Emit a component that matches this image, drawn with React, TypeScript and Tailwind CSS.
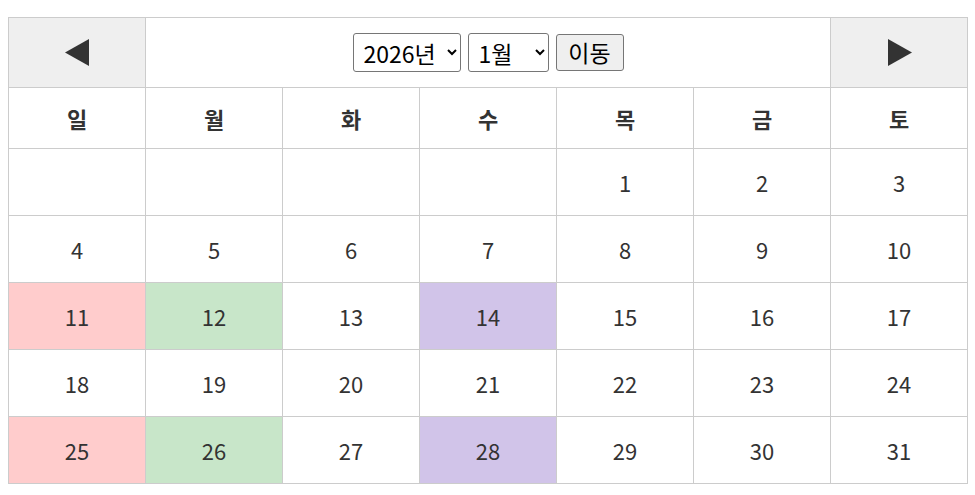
const DAYS = ["일", "월", "화", "수", "목", "금", "토"];

// 2026년 1월: starts Thursday
const WEEKS: (number | null)[][] = [
  [null, null, null, null, 1, 2, 3],
  [4, 5, 6, 7, 8, 9, 10],
  [11, 12, 13, 14, 15, 16, 17],
  [18, 19, 20, 21, 22, 23, 24],
  [25, 26, 27, 28, 29, 30, 31],
];

const HIGHLIGHT: Record<number, string> = {
  11: "bg-[#ffcccc]",
  25: "bg-[#ffcccc]",
  12: "bg-[#c8e6c9]",
  26: "bg-[#c8e6c9]",
  14: "bg-[#d1c4e9]",
  28: "bg-[#d1c4e9]",
};

export default function App() {
  return (
    <div className="pt-[17px] pl-2 bg-white min-h-[495px] text-[#333] font-['Noto_Sans_CJK_KR','Noto_Sans',sans-serif]">
      <table className="border-collapse table-fixed w-[960px]">
        <thead>
          <tr className="h-[70px]">
            <th className="w-[137px] border border-[#ccc] bg-[#efefef] p-0">
              <button className="w-full h-full flex items-center justify-center">
                <svg width="24" height="27" viewBox="0 0 24 27" className="mr-[1px]">
                  <polygon points="0,13.5 24,0 24,27" fill="#333" />
                </svg>
              </button>
            </th>
            <th colSpan={5} className="border border-[#ccc] p-0 font-normal">
              <div className="flex items-center justify-center gap-[7px]">
                <select
                  defaultValue="2026"
                  className="h-[39px] w-[108px] text-[23px] text-black border border-[#767676] rounded-[3px] bg-white pl-[6px] pr-[2px]"
                >
                  {[2024, 2025, 2026, 2027, 2028].map((y) => (
                    <option key={y} value={y}>
                      {y}년
                    </option>
                  ))}
                </select>
                <select
                  defaultValue="1"
                  className="h-[39px] w-[81px] text-[23px] text-black border border-[#767676] rounded-[3px] bg-white pl-[6px]"
                >
                  {Array.from({ length: 12 }, (_, i) => i + 1).map((m) => (
                    <option key={m} value={m}>
                      {m}월
                    </option>
                  ))}
                </select>
                <button className="h-[37px] w-[68px] text-[23px] text-black bg-[#efefef] border border-[#767676] rounded-[3px]">
                  이동
                </button>
              </div>
            </th>
            <th className="w-[137px] border border-[#ccc] bg-[#efefef] p-0">
              <button className="w-full h-full flex items-center justify-center">
                <svg width="24" height="27" viewBox="0 0 24 27" className="ml-[1px]">
                  <polygon points="0,0 24,13.5 0,27" fill="#333" />
                </svg>
              </button>
            </th>
          </tr>
          <tr className="h-[61px]">
            {DAYS.map((d) => (
              <th key={d} className="border border-[#ccc] text-[22px] font-bold">
                {d}
              </th>
            ))}
          </tr>
        </thead>
        <tbody>
          {WEEKS.map((week, wi) => (
            <tr key={wi} className="h-[67px]">
              {week.map((day, di) => (
                <td
                  key={di}
                  className={`border border-[#ccc] text-center text-[22px] ${day ? HIGHLIGHT[day] ?? "" : ""}`}
                >
                  {day ?? ""}
                </td>
              ))}
            </tr>
          ))}
        </tbody>
      </table>
    </div>
  );
}
